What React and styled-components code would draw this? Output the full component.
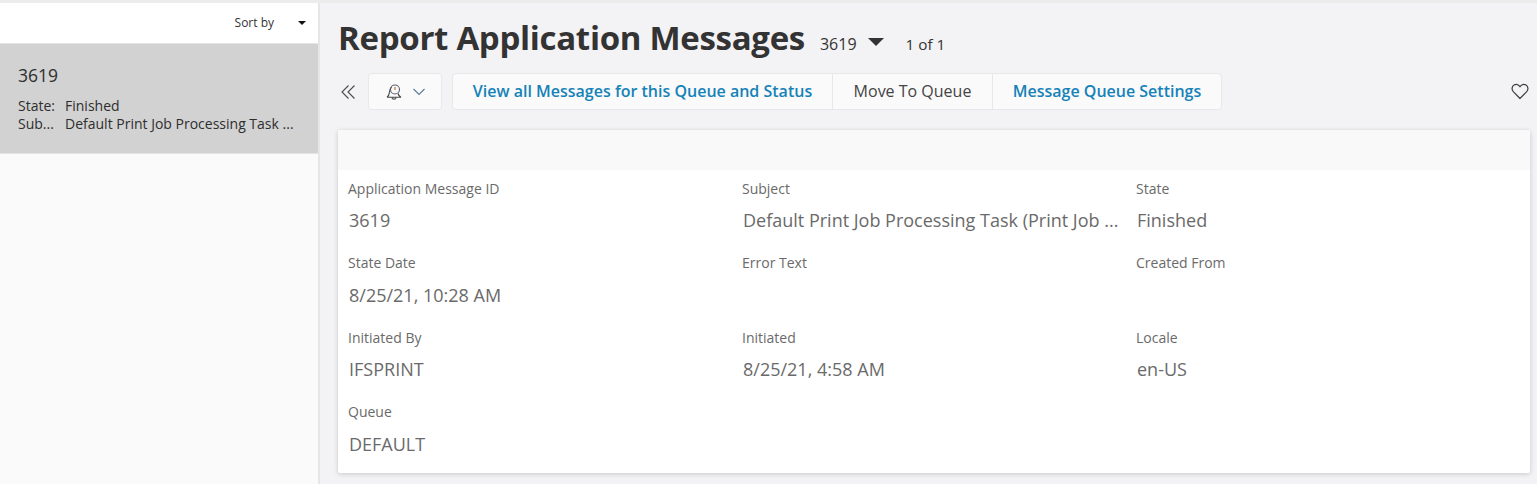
import React from 'react';
import styled, { createGlobalStyle } from 'styled-components';

const Global = createGlobalStyle`
  html, body { margin: 0; padding: 0; height: 100%; overflow: hidden; }
  body { font-family: 'Open Sans', 'Liberation Sans', sans-serif; background: #f3f2f5; }
  * { box-sizing: border-box; }
`;

const Page = styled.div`
  width: 1537px;
  height: 484px;
  display: flex;
  border-top: 3px solid #ececec;
  background: #f3f2f5;
`;

const Sidebar = styled.aside`
  width: 320px;
  flex: none;
  display: flex;
  flex-direction: column;
  background: #fafafa;
  border-right: 2px solid #e6e6e6;
`;

const SortBar = styled.div`
  height: 41px;
  flex: none;
  background: #fff;
  border-bottom: 1px solid #e4e4e4;
  display: flex;
  justify-content: flex-end;
  align-items: center;
  padding: 0 12px 0 0;
  font-size: 12px;
  color: #333;
`;

const SortLabel = styled.span`
  margin-right: 24px;
  position: relative;
  top: -1px;
`;

const Caret = styled.span`
  width: 0;
  height: 0;
  border-left: ${p => p.$size}px solid transparent;
  border-right: ${p => p.$size}px solid transparent;
  border-top: ${p => p.$size}px solid ${p => p.$color};
`;

const TitleCaret = styled(Caret)`
  align-self: flex-start;
  margin: 35px -1px 0 -1px;
`;

const ListItem = styled.div`
  height: 110px;
  flex: none;
  background: #d2d2d2;
  border-bottom: 1px solid #e4e4e4;
  padding: 19px 18px 0;
  color: #2e2e2e;
`;

const ItemTitle = styled.div`
  font-size: 17.5px;
  line-height: 24px;
  margin-bottom: 10px;
`;

const ItemRow = styled.div`
  display: flex;
  font-size: 14px;
  line-height: 18px;
  white-space: nowrap;
`;

const ItemKey = styled.span`
  width: 47px;
  flex: none;
`;

const Main = styled.main`
  flex: 1;
  min-width: 0;
  padding: 0 7px 0 18px;
  display: flex;
  flex-direction: column;
`;

const TitleRow = styled.div`
  height: 70px;
  flex: none;
  display: flex;
  align-items: baseline;
`;

const Title = styled.h1`
  margin: 0 15px 0 0;
  font-size: 33px;
  line-height: 70px;
  font-weight: 700;
  letter-spacing: -0.3px;
  color: #333;
  white-space: nowrap;
`;

const TitleId = styled.span`
  font-size: 16px;
  color: #333;
  margin-right: 12px;
`;

const Pager = styled.span`
  font-size: 15.3px;
  color: #333;
  margin-left: 23px;
`;

const Toolbar = styled.div`
  height: 37px;
  flex: none;
  display: flex;
  align-items: center;
`;

const IconSlot = styled.span`
  display: flex;
  color: #4a4a4a;
`;

const BackSlot = styled(IconSlot)`
  width: 30px;
  padding-left: 2px;
`;

const BellMenu = styled.div`
  width: 74px;
  height: 37px;
  display: flex;
  align-items: center;
  justify-content: center;
  gap: 11px;
  background: #fafafa;
  border: 1px solid #e8e8ea;
  border-radius: 4px;
  margin-right: 10px;
  color: #444;
`;

const ButtonGroup = styled.div`
  display: flex;
  height: 37px;
  background: #fafafa;
  border: 1px solid #e8e8ea;
  border-radius: 4px;
`;

const GroupButton = styled.div`
  display: flex;
  align-items: center;
  justify-content: center;
  width: ${p => p.$width}px;
  padding-bottom: 2px;
  font-size: 16px;
  font-weight: ${p => (p.$primary ? 600 : 400)};
  color: ${p => (p.$primary ? '#1582b8' : '#444')};
  white-space: nowrap;
  & + & { border-left: 1px solid #e8e8ea; }
`;

const HeartSlot = styled(IconSlot)`
  margin: 0 1px 2px auto;
  color: #3c3c3c;
`;

const Card = styled.section`
  margin-top: 20px;
  width: 1192px;
  height: 343px;
  background: #fff;
  border-radius: 2px;
  box-shadow: 0 1px 5px rgba(0, 0, 0, 0.18);
`;

const CardHeader = styled.div`
  height: 40px;
  background: #f9f9f9;
`;

const Fields = styled.div`
  display: grid;
  grid-template-columns: repeat(3, 394px);
  grid-auto-rows: 74.5px;
  padding: 8.75px 0 0 10px;
`;

const Field = styled.div`
  color: #6a6a6a;
  white-space: nowrap;
`;

const FieldLabel = styled.div`
  font-size: 14px;
  line-height: 20px;
`;

const FieldValue = styled.div`
  font-size: 18px;
  line-height: 24px;
  margin: 9.5px 0 0 1px;
`;

const fields = [
  ['Application Message ID', '3619'],
  ['Subject', 'Default Print Job Processing Task (Print Job ...'],
  ['State', 'Finished'],
  ['State Date', '8/25/21, 10:28 AM'],
  ['Error Text', ''],
  ['Created From', ''],
  ['Initiated By', 'IFSPRINT'],
  ['Initiated', '8/25/21, 4:58 AM'],
  ['Locale', 'en-US'],
  ['Queue', 'DEFAULT'],
];

function App() {
  return (
    <Page>
      <Global />
      <Sidebar>
        <SortBar>
          <SortLabel>Sort by</SortLabel>
          <Caret $size={4} $color="#111" />
        </SortBar>
        <ListItem>
          <ItemTitle>3619</ItemTitle>
          <ItemRow><ItemKey>State:</ItemKey>Finished</ItemRow>
          <ItemRow><ItemKey>Sub...</ItemKey>Default Print Job Processing Task ...</ItemRow>
        </ListItem>
      </Sidebar>
      <Main>
        <TitleRow>
          <Title>Report Application Messages</Title>
          <TitleId>3619</TitleId>
          <TitleCaret $size={8} $color="#333" />
          <Pager>1 of 1</Pager>
        </TitleRow>
        <Toolbar>
          <BackSlot>
            <svg width="16" height="16" viewBox="0 0 16 16" fill="none" stroke="currentColor" strokeWidth="1.1">
              <path d="M8.500 1.500 2 8l6.500 6.500M14.500 1.500 8 8l6.500 6.500" />
            </svg>
          </BackSlot>
          <BellMenu>
            <svg width="16" height="16" viewBox="0 0 16 16" fill="none" stroke="currentColor" strokeWidth="1.100">
              <path d="M1 13.300h14M1 13.300c1.300-1 2-2.400 2.300-4.500.2-2 .6-4.300 2.200-6M12 9.500c.4 1.600 1.500 3 3 3.800M6 13.800c.4 1.700 3.600 1.700 4 0" />
              <circle cx="9" cy="5.500" r="4.500" stroke="#5b5b6b" />
              <path d="M9 3v3" stroke="#b5651d" />
            </svg>
            <svg width="12" height="8" viewBox="0 0 12 8" fill="none" stroke="#5a7a96" strokeWidth="1.100">
              <path d="M.5 1 6 6.500 11.500 1" />
            </svg>
          </BellMenu>
          <ButtonGroup>
            <GroupButton $primary $width={379}>View all Messages for this Queue and Status</GroupButton>
            <GroupButton $width={160}>Move To Queue</GroupButton>
            <GroupButton $primary $width={229}>Message Queue Settings</GroupButton>
          </ButtonGroup>
          <HeartSlot>
            <svg width="18" height="18" viewBox="0 0 18 18" fill="none" stroke="currentColor" strokeWidth="1.200">
              <path d="M9 16.500 2.300 9.700C.400 7.600.700 4.400 3 3 5 1.900 7.500 2.500 9 4.600c1.500-2.100 4-2.700 6-1.600 2.300 1.400 2.600 4.600.7 6.700L9 16.500Z" />
            </svg>
          </HeartSlot>
        </Toolbar>
        <Card>
          <CardHeader />
          <Fields>
            {fields.map(([label, value]) => (
              <Field key={label}>
                <FieldLabel>{label}</FieldLabel>
                <FieldValue>{value}</FieldValue>
              </Field>
            ))}
          </Fields>
        </Card>
      </Main>
    </Page>
  );
}

export default App;
